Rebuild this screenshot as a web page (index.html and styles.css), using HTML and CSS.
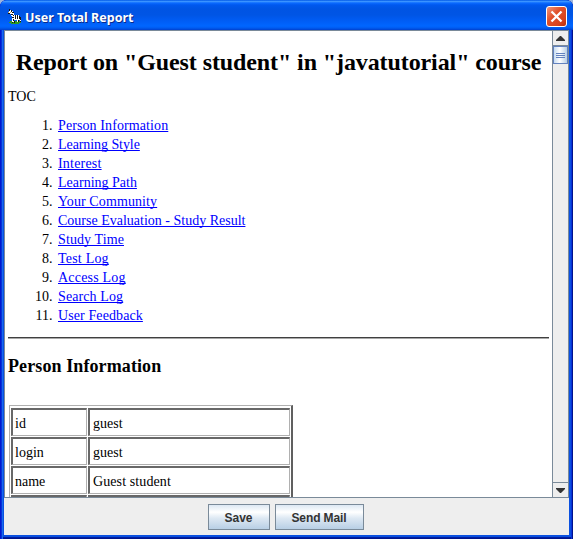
FILE: index.html
```html
<!DOCTYPE html>
<html lang="en">
<head>
<meta charset="utf-8">
<title>User Total Report</title>
<link rel="stylesheet" href="styles.css">
</head>
<body>
<div class="window">
  <header class="titlebar">
    <svg class="zebra" width="16" height="16" viewBox="0 0 16 16" shape-rendering="crispEdges">
      <path fill="#2d9a25" d="M3 12h10v1h1v1h-2v1H4v-1H2v-1h1z"/>
      <path fill="#fff" d="M2 1h2v1h2v2h1v2h5v1h1v3h1v3h-1v-2h-2v2h-1v-2H7v2H5V7H4V5H1V3h1z"/>
      <path fill="#151515" d="M2 0h1v2H2zM4 1h1v2H4zM1 4h2v1H1zM5 3h2v1H5zM4 5h2v1H4zM6 6h1v1H6zM5 8h2v1H5zM8 6h1v4H8zM10 6h1v4h-1zM12 7h1v3h-1zM13 8h1v3h-1zM6 10h1v2H6zM5 13h1v1H5zM7 12h1v2H7zM11 11h1v2h-1zM13 12h1v1h-1z"/>
      <path fill="#c8a868" d="M1 3h1v1H1zM3 3h1v1H3z"/>
    </svg>
    <h1 class="title">User Total Report</h1>
    <button class="close" aria-label="Close"><svg width="19" height="19" viewBox="0 0 19 19"><path d="M4.5 4.5l10 10M14.5 4.5l-10 10" stroke="#fff" stroke-width="2.3"/></svg></button>
  </header>
  <div class="pane">
    <main class="doc">
      <h2 class="heading">Report on "Guest student" in "javatutorial" course</h2>
      <p class="toc-label">TOC</p>
      <ol class="toc">
        <li><a class="wide" href="#">Person Information</a></li>
        <li><a class="tight" href="#">Learning Style</a></li>
        <li><a class="wider" href="#">Interest</a></li>
        <li><a href="#">Learning Path</a></li>
        <li><a class="wide" href="#">Your Community</a></li>
        <li><a href="#">Course Evaluation - Study Result</a></li>
        <li><a class="wide" href="#">Study Time</a></li>
        <li><a class="wider" href="#">Test Log</a></li>
        <li><a class="wider" href="#">Access Log</a></li>
        <li><a class="wide" href="#">Search Log</a></li>
        <li><a class="wide" href="#">User Feedback</a></li>
      </ol>
      <hr class="rule">
      <h3 class="section">Person Information</h3>
      <div class="table">
        <div class="cell">id</div><div class="cell">guest</div>
        <div class="cell">login</div><div class="cell">guest</div>
        <div class="cell">name</div><div class="cell wide">Guest student</div>
        <div class="cell"></div><div class="cell"></div>
      </div>
    </main>
    <div class="scrollbar">
      <div class="arrow"><svg width="9" height="5" viewBox="0 0 9 5"><path d="M4 0h1l4 4v1H0V4z" fill="#333"/></svg></div>
      <div class="thumb"><i></i><i></i><i></i></div>
      <div class="track"></div>
      <div class="arrow down"><svg width="9" height="5" viewBox="0 0 9 5"><path d="M0 0h9v1L5 5H4L0 1z" fill="#333"/></svg></div>
    </div>
  </div>
  <footer class="actions">
    <button class="btn save">Save</button>
    <button class="btn mail">Send Mail</button>
  </footer>
</div>
</body>
</html>
```
FILE: styles.css
```css
* { box-sizing: border-box; }
body { margin: 0; background: #9db4dc; overflow: hidden; }
.window {
  width: 573px; height: 539px;
  display: flex; flex-direction: column;
  padding: 0 4px 4px;
  border-radius: 7px 7px 0 0;
  background: #0a50e0;
  box-shadow: inset 1px 0 #0019cf, inset 2px 0 #0831d9, inset 3px 0 #166aee, inset -1px 0 #00138c, inset -2px 0 #0831d9, inset 0 -1px #00138c, inset 0 -2px #001ea0;
  overflow: hidden;
}
.titlebar {
  height: 30px; flex: none;
  margin: 0 -4px; padding: 4px 6px 0 7px;
  display: flex; align-items: center;
  background: linear-gradient(#0058e6 0, #3a93ff 1.5px, #0b6aff 3px, #0058ee 5px, #0054e3 9px, #0055e5 15px, #005df5 21px, #0066ff 26px, #005bf0 28px, #0040ce 30px);
}
.zebra { display: block; margin-top: -1px; }
.title {
  margin: 1px auto 0 2px;
  font: bold 12.5px/18px "Noto Sans", "Open Sans", sans-serif;
  color: #fff; text-shadow: 1px 1px #0a2a8a;
  white-space: nowrap;
}
.close {
  width: 21px; height: 21px; padding: 0;
  border: 1px solid #fff; border-radius: 3px;
  margin-top: -1px;
  background: linear-gradient(135deg, #f0967c, #e0512b 40%, #d8431d 75%, #b52f0b);
}
.close svg { display: block; }
.pane {
  height: 468px; flex: none;
  display: flex;
  border: 1px solid #7a8a99;
  background: #fff;
}
.doc {
  flex: 1; min-width: 0;
  padding: 0 3px;
  overflow: hidden;
  font: 14px/19px "Liberation Serif", serif;
  color: #000;
}
.heading {
  margin: 16px 0 10px;
  font-size: 24px; line-height: 30px; letter-spacing: -0.1px;
  text-align: center; white-space: nowrap;
}
.toc-label { margin: 0 0 10px; }
.toc { margin: 0; padding: 0 0 0 48px; }
.toc li { padding-left: 2px; }
.toc a { color: #0000ff; text-underline-offset: 1px; text-decoration-thickness: 1px; text-decoration-skip-ink: none; }
.tight { letter-spacing: -0.07px; }
.wide { letter-spacing: 0.1px; }
.wider { letter-spacing: 0.2px; }
.rule { height: 2px; margin: 12px 0 16px; border: 0; border-top: 1px solid #404040; background: #a8a8a8; }
.section { margin: 0 0 28px; font-size: 18px; line-height: 22px; letter-spacing: 0.1px; }
.table {
  display: grid; grid-template-columns: 76px 202px; grid-auto-rows: 28px;
  gap: 1px; width: 284px; margin-left: 1px; padding: 2px 1px 1px;
  border: 1px solid #b0b0b0; border-right: 2px solid #606060;
}
.cell { padding: 4px 3px 0 2px; border: 1px solid #b0b0b0; border-top: 2px solid #686868; border-left: 2px solid #686868; }
.cell:nth-child(even) { padding-left: 3px; }
.scrollbar {
  width: 16px; display: flex; flex-direction: column;
  border-left: 1px solid #7a8a99; background: #eee;
}
.arrow { height: 15px; flex: none; display: flex; align-items: center; justify-content: center; border-bottom: 1px solid #7a8a99; }
.arrow.down { border: 0; border-top: 1px solid #7a8a99; }
.thumb {
  height: 18px; flex: none; border: 1px solid #6382bf;
  display: flex; flex-direction: column; align-items: center; justify-content: center; gap: 1px;
  background: linear-gradient(90deg, #c8ddf2, #fff 45%, #b8cfe5);
}
.thumb i { width: 9px; height: 1px; background: #6382bf; }
.track { flex: 1; }
.actions {
  flex: 1; display: flex; justify-content: center; gap: 5px;
  padding: 6px 2px 0 0; background: #eee;
}
.btn {
  height: 26px; padding: 2px 0 0;
  border: 1px solid #7a8a99;
  background: linear-gradient(#dde8f3, #fff 30%, #dde8f3 55%, #b8cfe5);
  font: bold 12px/22px "Liberation Sans", sans-serif; color: #333;
}
.save { width: 62px; }
.mail { width: 89px; letter-spacing: -0.1px; }
```
